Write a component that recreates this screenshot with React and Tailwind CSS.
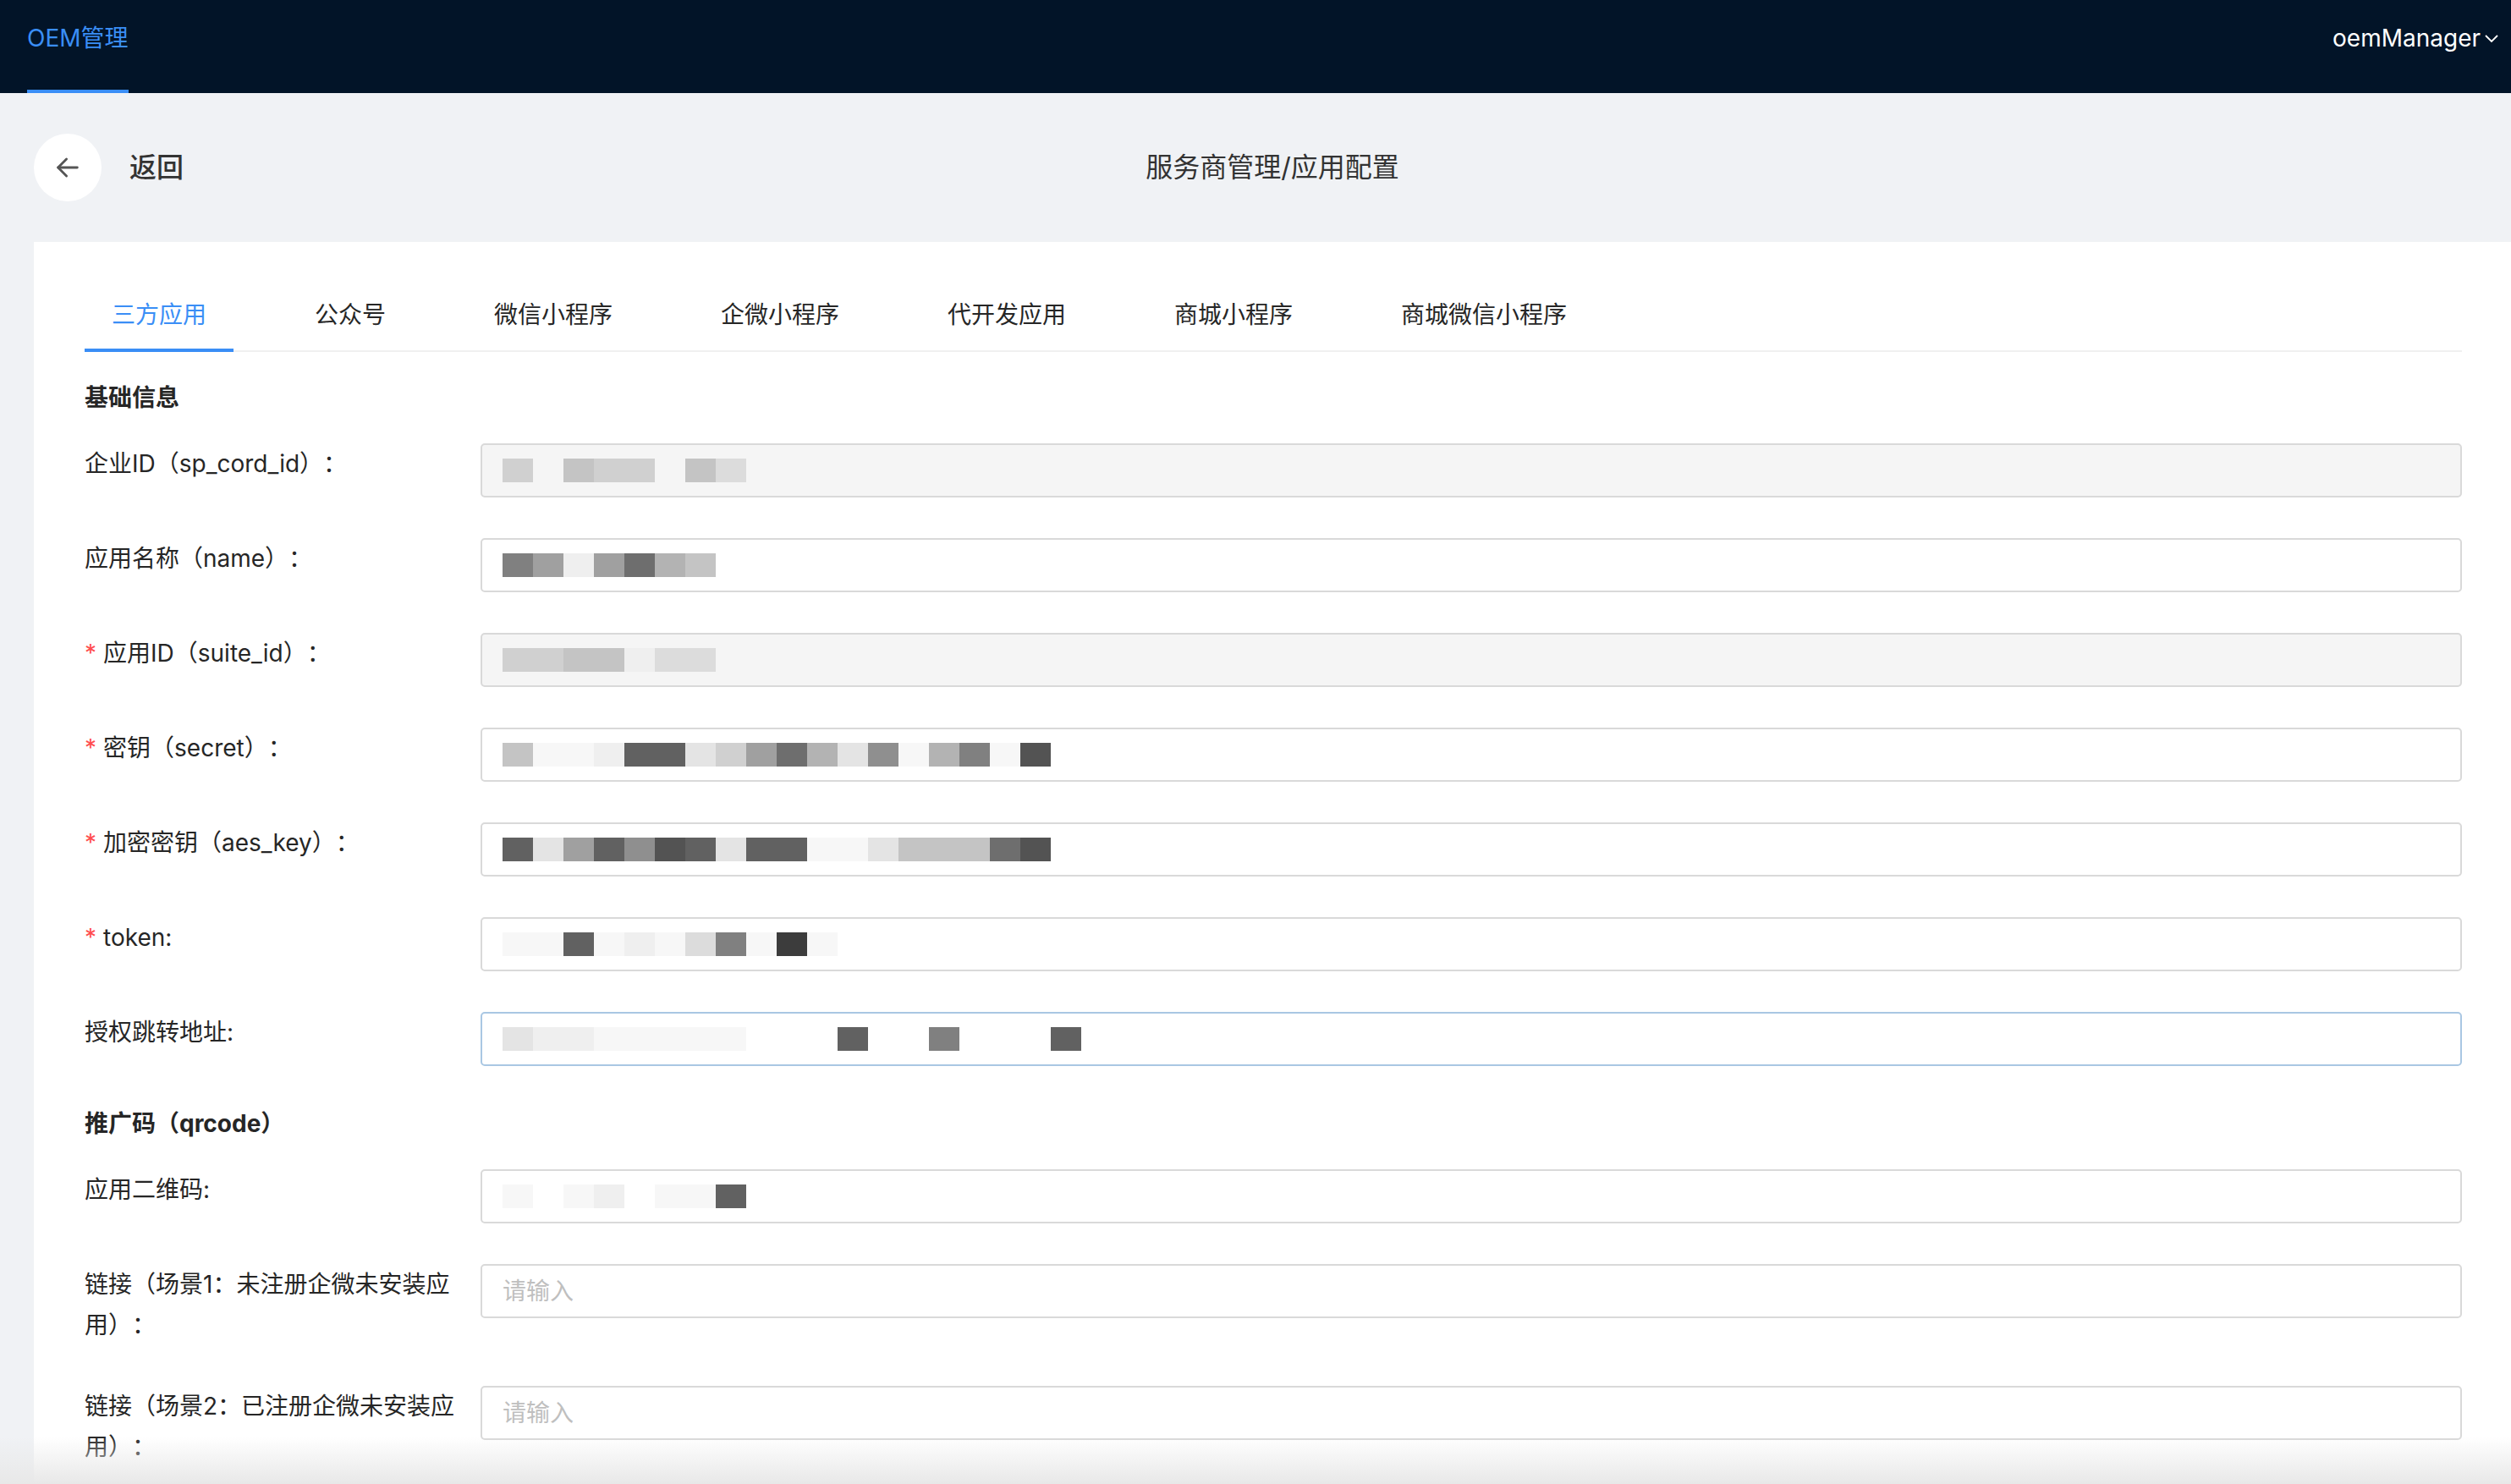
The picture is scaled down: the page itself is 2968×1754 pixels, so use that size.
import React from 'react';

const shade = {
  '0': 'bg-[#3c3c3c]',
  '1': 'bg-[#535353]',
  '2': 'bg-[#616161]',
  '3': 'bg-[#6e6e6e]',
  '4': 'bg-[#808080]',
  '5': 'bg-[#8f8f8f]',
  '6': 'bg-[#a0a0a0]',
  '7': 'bg-[#b3b3b3]',
  '8': 'bg-[#c4c4c4]',
  '9': 'bg-[#d0d0d0]',
  a: 'bg-[#dcdcdc]',
  b: 'bg-[#e4e4e4]',
  c: 'bg-[#efefef]',
  d: 'bg-[#f7f7f7]',
  e: 'bg-transparent',
};

const tabs = ['三方应用', '公众号', '微信小程序', '企微小程序', '代开发应用', '商城小程序', '商城微信小程序'];

const basicRows = [
  { label: '企业ID（sp_cord_id）：', disabled: true, mask: '9e899e8a' },
  { label: '应用名称（name）：', mask: '46c6378' },
  { label: '应用ID（suite_id）：', required: true, disabled: true, mask: '9988caa' },
  { label: '密钥（secret）：', required: true, mask: '8ddc22b9637b5d74d1' },
  { label: '加密密钥（aes_key）：', required: true, mask: '2b62512b22ddb88831' },
  { label: 'token:', required: true, mask: 'dd2dcda4d0d' },
  { label: '授权跳转地址:', focused: true, mask: 'bccdddddeee2ee4eee2eeeeeee' },
];

const qrRows = [
  { label: '应用二维码:', mask: 'dedcedd2' },
  { label: '链接（场景1：未注册企微未安装应用）：', placeholder: '请输入' },
  { label: '链接（场景2：已注册企微未安装应用）：', placeholder: '请输入' },
];

function Mask({ pattern }) {
  return (
    <div className="flex h-[28px]">
      {pattern.split('').map((c, i) => (
        <div key={i} className={'w-[36px] h-full ' + shade[c]} />
      ))}
    </div>
  );
}

function FormRow({ row }) {
  let box = 'border-[#d9d9d9] bg-white';
  if (row.disabled) box = 'border-[#d9d9d9] bg-[#f5f5f5]';
  if (row.focused) box = 'border-[#a9c7e3] bg-white';
  return (
    <div className="flex mb-[48px]">
      <div className="w-[468px] shrink-0 pr-[16px] text-[28px] leading-[48px] text-[#262626]">
        {row.required && <span className="text-[#ff4d4f] mr-[8px]">*</span>}
        {row.label}
      </div>
      <div className={'flex-1 h-[64px] border-2 rounded-[5px] flex items-center px-[24px] ' + box}>
        {row.mask && <Mask pattern={row.mask} />}
        {row.placeholder && <span className="text-[28px] text-[#bfbfbf]">{row.placeholder}</span>}
      </div>
    </div>
  );
}

export default function App() {
  return (
    <div className="relative h-[1754px] overflow-hidden bg-[#f0f2f5] font-['Inter','Noto_Sans_CJK_SC',sans-serif] [text-spacing-trim:space-all]">
      <header className="h-[110px] bg-[#021428] flex justify-between">
        <div className="ml-[32px] h-full border-b-[4px] border-[#3a8ef6] pt-[28px]">
          <span className="text-[28px] leading-[34px] text-[#3a8ef6]">OEM管理</span>
        </div>
        <div className="flex items-start pt-[28px] pr-[14px]">
          <span className="text-[28px] leading-[34px] text-white">oemManager</span>
          <svg className="ml-[4px] mt-[12px]" width="18" height="12" viewBox="0 0 18 12" fill="none">
            <polyline points="2,2 9,9 16,2" stroke="white" strokeWidth="1.8" />
          </svg>
        </div>
      </header>

      <div className="h-[176px] pl-[40px] grid grid-cols-[1fr_auto_1fr] items-center">
        <div className="flex items-center">
          <div className="w-[80px] h-[80px] rounded-full bg-white flex items-center justify-center">
            <svg width="34" height="34" viewBox="0 0 24 24" fill="none" stroke="#555" strokeWidth="2" strokeLinecap="round" strokeLinejoin="round">
              <line x1="20" y1="12" x2="4" y2="12" />
              <polyline points="11,5 4,12 11,19" />
            </svg>
          </div>
          <span className="ml-[33px] text-[32px] text-[#333] font-medium">返回</span>
        </div>
        <div className="text-[32px] text-[#333]">服务商管理/应用配置</div>
        <div />
      </div>

      <div className="ml-[40px] bg-white pt-[44px] pl-[60px] pr-[58px] min-h-[1500px]">
        <div className="flex gap-[64px] border-b-2 border-[#f0f0f0]">
          {tabs.map((t, i) => (
            <div key={t} className="relative px-[32px] py-[20px]">
              <span className={'text-[28px] leading-[44px] ' + (i === 0 ? 'text-[#3a8ef6]' : 'text-[#262626]')}>{t}</span>
              {i === 0 && <div className="absolute left-0 right-0 bottom-[-2px] h-[4px] bg-[#3a8ef6]" />}
            </div>
          ))}
        </div>

        <div className="mt-[34px] mb-[34px] h-[40px] leading-[40px] text-[28px] font-bold text-[#262626]">基础信息</div>
        {basicRows.map((r) => (
          <FormRow key={r.label} row={r} />
        ))}

        <div className="mb-[34px] h-[40px] leading-[40px] text-[28px] font-bold text-[#262626]">推广码（qrcode）</div>
        {qrRows.map((r) => (
          <FormRow key={r.label} row={r} />
        ))}
      </div>

      <div className="absolute bottom-0 left-0 right-0 h-[56px] bg-linear-to-b from-white/0 to-[#e8e8e8]" />
    </div>
  );
}
